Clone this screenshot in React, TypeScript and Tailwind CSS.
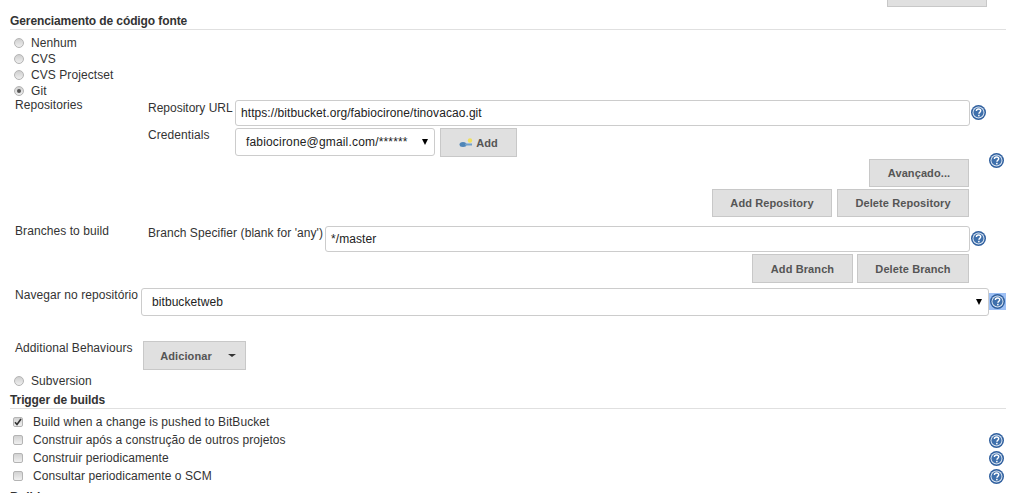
function HelpIcon({ selected = false }: { selected?: boolean }) {
  return (
    <span className={`inline-flex h-[17px] w-[17px] shrink-0 items-center justify-center ${selected ? 'bg-[#9dc0f5]' : ''}`}>
      <svg width="15" height="15" viewBox="0 0 15 15">
        <circle cx="7.5" cy="7.5" r="7.5" fill="#2f5f9e" />
        <circle cx="7.5" cy="7.5" r="6" fill="#dfe8f3" />
        <circle cx="7.5" cy="7.5" r="5" fill="#3f70ac" />
        <path d="M5.4 6c0-1.300 1-2 2.200-2s2.100.7 2.100 1.800c0 1.600-1.800 1.500-1.800 2.900" fill="none" stroke="#fff" strokeWidth="1.400" />
        <rect x="7.100" y="9.800" width="1.500" height="1.500" fill="#fff" />
      </svg>
    </span>
  );
}

function Radio({ checked = false }: { checked?: boolean }) {
  return (
    <span className="flex h-[10px] w-[10px] shrink-0 items-center justify-center rounded-full border border-[#b4b4b4] bg-gradient-to-b from-[#cfcfcf] to-[#efefef]">
      {checked && <span className="h-1 w-1 rounded-full bg-[#555]" />}
    </span>
  );
}

function Checkbox({ checked = false }: { checked?: boolean }) {
  return (
    <span className="flex h-[10px] w-[10px] shrink-0 items-center justify-center rounded-[2px] border border-[#b4b4b4] bg-gradient-to-b from-[#d2d2d2] to-[#f0f0f0]">
      {checked && (
        <svg width="8" height="8" viewBox="0 0 8 8">
          <path d="M1 4.200 3 6.500 7 1" fill="none" stroke="#333" strokeWidth="1.600" />
        </svg>
      )}
    </span>
  );
}

function Btn({ children, className = '' }: { children: React.ReactNode; className?: string }) {
  return (
    <button className={`flex items-center justify-center border border-[#c8c8c8] bg-[#e0e0e0] text-[11px] font-bold tracking-[0.1px] text-[#555] ${className}`}>
      {children}
    </button>
  );
}

function SelectArrow() {
  return <span className="h-0 w-0 border-x-[3px] border-t-[6px] border-x-transparent border-t-black" />;
}

function SectionTitle({ children }: { children: React.ReactNode }) {
  return <div className="ml-[10px] mr-[6px] border-b border-[#e0e0e0] text-[12px] font-bold leading-[16px] tracking-[-0.1px] text-[#333]">{children}</div>;
}

function RadioRow({ label, checked }: { label: string; checked?: boolean }) {
  return (
    <div className="flex h-4 items-center pl-[14px]">
      <Radio checked={checked} />
      <span className="ml-[7px]">{label}</span>
    </div>
  );
}

function CheckRow({ label, checked, help }: { label: string; checked?: boolean; help?: boolean }) {
  return (
    <div className="flex h-[18px] items-center pl-[13px] pr-[7px]">
      <Checkbox checked={checked} />
      <span className="ml-[10px] flex-1">{label}</span>
      {help && <HelpIcon />}
    </div>
  );
}

export default function App() {
  return (
    <div className="h-[493px] w-[1012px] overflow-hidden bg-white font-['Liberation_Sans',Arial,sans-serif] text-[12px] leading-[16px] tracking-[0.07px] text-[#333]">
      {/* top save button, cut by the window */}
      <div className="flex h-[7px] items-end justify-end overflow-hidden pr-[25px]">
        <div className="h-[20px] w-[100px] shrink-0 border border-[#c8c8c8] bg-[#e0e0e0]" />
      </div>

      <div className="mt-[6px]">
        <SectionTitle>Gerenciamento de código fonte</SectionTitle>
      </div>

      <div className="mt-[5px]">
        <RadioRow label="Nenhum" />
        <RadioRow label="CVS" />
        <RadioRow label="CVS Projectset" />
        <RadioRow label="Git" checked />
      </div>

      {/* Repositories */}
      <div className="mt-[1px] flex">
        <div className="-mt-[3px] w-[148px] pl-[15px]">Repositories</div>
        <div className="flex-1 pr-[15px]">
          <div className="flex">
            <div className="w-[87px] tracking-normal">Repository URL</div>
            <div className="flex h-[26px] w-[735px] items-center rounded-[3px] border border-[#ccc] pl-[5px] text-[#222]">
              https://bitbucket.org/fabiocirone/tinovacao.git
            </div>
            <div className="mt-[4px]"><HelpIcon /></div>
          </div>
          <div className="mt-[2px] flex">
            <div className="-mt-[1px] w-[87px]">Credentials</div>
            <div className="flex h-[28px] w-[200px] items-center justify-between rounded-[3px] border border-[#ccc] pl-[10px] pr-[6px] text-[#222]">
              <span className="tracking-[0.17px]">fabiocirone@gmail.com/******</span>
              <SelectArrow />
            </div>
            <Btn className="ml-[5px] h-[29px] w-[77px] gap-[3px]">
              <svg width="14" height="10" viewBox="0 0 14 10">
                <ellipse cx="4" cy="6.500" rx="3.500" ry="2.500" fill="#4f86b8" />
                <rect x="6" y="5.500" width="7" height="2" fill="#6fa0cc" />
                <circle cx="11" cy="2.500" r="2.200" fill="#f0e060" />
              </svg>
              Add
            </Btn>
          </div>
          <div className="mt-[2px] flex justify-end">
            <Btn className="h-[28px] w-[100px]">Avançado...</Btn>
            <div className="-mt-[7px] ml-[19px] mr-[-8px] w-[17px]"><HelpIcon /></div>
          </div>
          <div className="mt-[2px] flex justify-end gap-[5px] pr-[28px]">
            <Btn className="h-[28px] w-[120px]">Add Repository</Btn>
            <Btn className="h-[28px] w-[132px]">Delete Repository</Btn>
          </div>
        </div>
      </div>

      {/* Branches */}
      <div className="mt-[9px] flex">
        <div className="-mt-[3px] w-[148px] pl-[15px]">Branches to build</div>
        <div className="flex-1">
          <div className="flex">
            <div className="-mt-[1px] w-[177px]">Branch Specifier (blank for 'any')</div>
            <div className="flex h-[26px] w-[645px] items-center rounded-[3px] border border-[#ccc] pl-[5px] text-[#222]">*/master</div>
            <div className="mt-[4px]"><HelpIcon /></div>
          </div>
          <div className="mt-[2px] flex justify-end gap-[4px] pr-[43px]">
            <Btn className="h-[29px] w-[101px]">Add Branch</Btn>
            <Btn className="h-[29px] w-[112px]">Delete Branch</Btn>
          </div>
        </div>
      </div>

      {/* Browser */}
      <div className="mt-[5px] flex">
        <div className="-mt-[1px] w-[141px] pl-[15px]">Navegar no repositório</div>
        <div className="flex h-[28px] w-[848px] items-center justify-between rounded-[3px] border border-[#ccc] pl-[10px] pr-[6px] text-[#222]">
          <span>bitbucketweb</span>
          <SelectArrow />
        </div>
        <div className="mt-[5px]"><HelpIcon selected /></div>
      </div>

      {/* Additional behaviours */}
      <div className="mt-[25px] flex">
        <div className="-mt-[1px] w-[143px] pl-[15px]">Additional Behaviours</div>
        <Btn className="h-[29px] w-[103px]">
          <span className="ml-[7px]">Adicionar</span>
          <span className="ml-[16px] h-0 w-0 border-x-[4px] border-t-[3px] border-x-transparent border-t-[#333]" />
        </Btn>
      </div>

      <div className="mt-[3px]">
        <RadioRow label="Subversion" />
      </div>

      <div className="mt-[3px]">
        <SectionTitle>Trigger de builds</SectionTitle>
      </div>

      <div className="mt-[4px]">
        <CheckRow label="Build when a change is pushed to BitBucket" checked />
        <CheckRow label="Construir após a construção de outros projetos" help />
        <CheckRow label="Construir periodicamente" help />
        <CheckRow label="Consultar periodicamente o SCM" help />
      </div>

      <div className="mt-[4px] pl-[10px] font-bold">Build</div>
    </div>
  );
}
